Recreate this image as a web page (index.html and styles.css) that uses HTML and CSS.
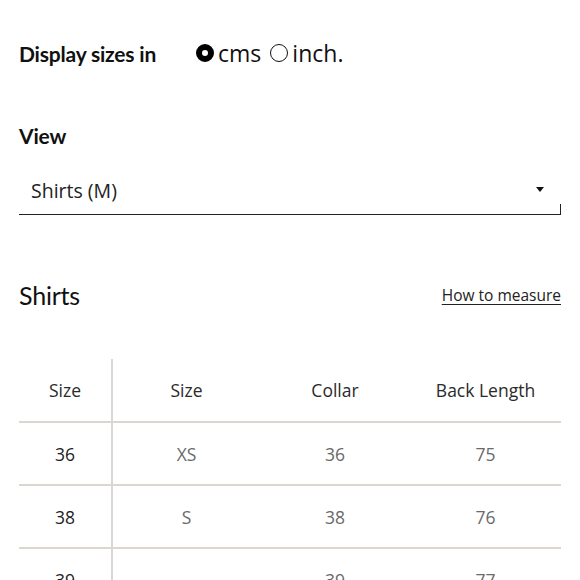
FILE: index.html
```html
<!DOCTYPE html>
<html>
<head>
<meta charset="utf-8">
<link rel="stylesheet" href="styles.css">
</head>
<body>
<div class="page">
  <div class="units">
    <span class="label">Display sizes in</span>
    <div class="radios">
      <span class="radio on"></span><span class="opt">cms</span>
      <span class="radio"></span><span class="opt">inch.</span>
    </div>
  </div>

  <div class="view-label label">View</div>
  <div class="select">
    <span class="sel-text">Shirts (M)</span>
    <span class="caret"></span>
  </div>

  <div class="section-head">
    <h2 class="title">Shirts</h2>
    <a class="how">How to measure</a>
  </div>

  <table class="sizes">
    <colgroup>
      <col class="c1"><col class="c2"><col class="c3"><col class="c4">
    </colgroup>
    <thead>
      <tr><th class="first">Size</th><th>Size</th><th>Collar</th><th>Back Length</th></tr>
    </thead>
    <tbody>
      <tr><td class="first">36</td><td>XS</td><td>36</td><td>75</td></tr>
      <tr><td class="first">38</td><td>S</td><td>38</td><td>76</td></tr>
      <tr><td class="first">39</td><td></td><td>39</td><td>77</td></tr>
    </tbody>
  </table>
</div>
</body>
</html>
```

FILE: styles.css
```css
html, body {
  margin: 0;
  padding: 0;
  background: #fff;
  overflow: hidden;
}
.page {
  width: 542px;
  padding: 0 19px;
  font-family: "Open Sans", sans-serif;
  color: #1a1a1a;
}
.label {
  font-family: Lato, "Noto Sans", sans-serif;
  font-weight: 700;
  font-size: 21px;
  letter-spacing: -0.2px;
  color: #111;
}
.units {
  display: flex;
  align-items: center;
  height: 30px;
  margin-top: 38px;
}
.radios {
  display: flex;
  align-items: center;
  margin-left: 40px;
}
.radio {
  width: 16px;
  height: 16px;
  border: 1.5px solid #111;
  border-radius: 50%;
  box-sizing: content-box;
}
.radio.on {
  width: 6px;
  height: 6px;
  border: 6.5px solid #000;
}
.opt {
  font-family: "Open Sans", sans-serif;
  font-size: 23px;
  color: #111;
  margin-left: 4px;
  margin-right: 9px;
  line-height: 30px;
}
.view-label {
  margin-top: 54px;
  line-height: 28px;
}
.select {
  position: relative;
  height: 52px;
  margin-top: 12px;
  border-bottom: 1.5px solid #222;
  display: flex;
  align-items: center;
  padding-left: 12px;
}
.select::after {
  content: "";
  position: absolute;
  right: 0;
  bottom: 0;
  width: 1.5px;
  height: 10px;
  background: #222;
}
.sel-text {
  font-size: 19.5px;
  color: #222;
  margin-top: 4px;
}
.caret {
  position: absolute;
  right: 17px;
  top: 25px;
  width: 0;
  height: 0;
  border-left: 4px solid transparent;
  border-right: 4px solid transparent;
  border-top: 5px solid #111;
}
.section-head {
  display: flex;
  justify-content: space-between;
  align-items: center;
  margin-top: 63px;
  height: 34px;
}
.title {
  margin: 0;
  font-family: Lato, "Noto Sans", sans-serif;
  font-weight: 400;
  font-size: 25px;
  letter-spacing: -0.2px;
  color: #111;
}
.how {
  font-size: 15.5px;
  color: #222;
  text-decoration: underline;
  text-underline-offset: 3px;
}
.sizes {
  margin-top: 47px;
  width: 542px;
  border-collapse: collapse;
  table-layout: fixed;
}
.c1 { width: 93px; }
.c2 { width: 148px; }
.c3 { width: 150px; }
.c4 { width: 151px; }
.sizes th, .sizes td {
  height: 61px;
  padding: 0;
  text-align: center;
  font-size: 17.5px;
  border-bottom: 2px solid #dbd6cf;
}
.sizes th {
  font-weight: 400;
  color: #2a2a2a;
  height: 62px;
}
.sizes td {
  color: #6a6a6a;
}
.sizes td.first {
  color: #1e1e1e;
}
.sizes .first {
  border-right: 2px solid #dbd6cf;
}
```
